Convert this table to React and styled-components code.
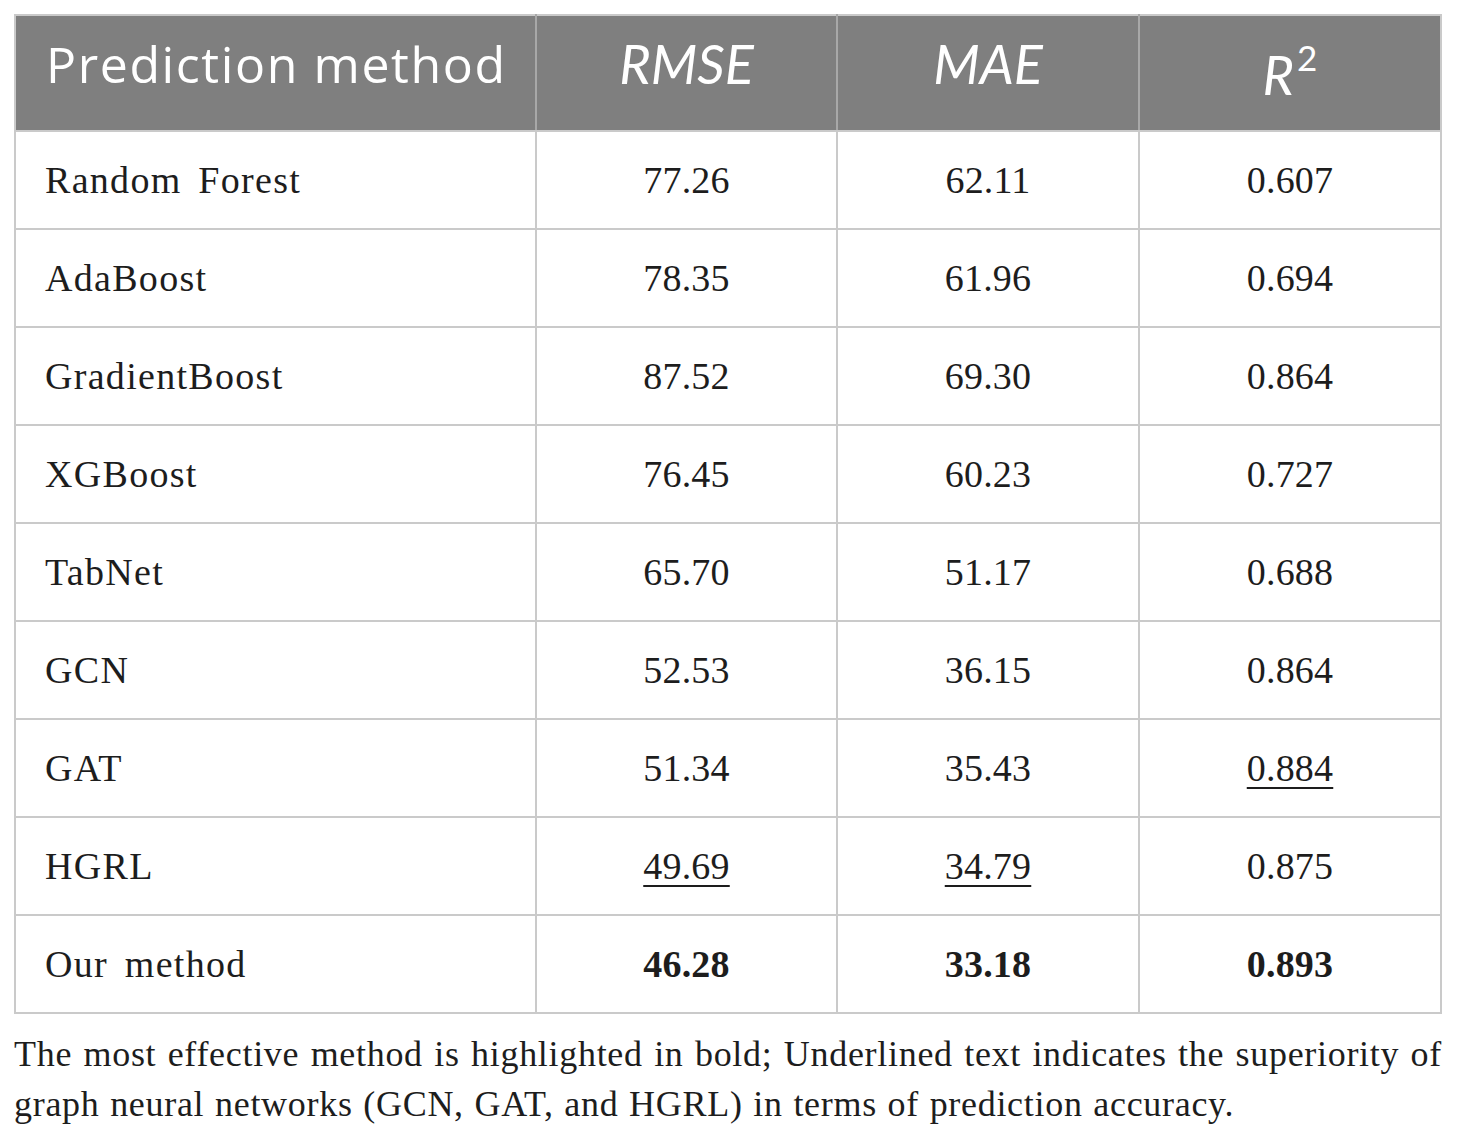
import React from 'react';
import styled, { createGlobalStyle } from 'styled-components';

const GlobalStyle = createGlobalStyle`
  html, body {
    margin: 0;
    padding: 0;
    background: #ffffff;
  }
`;

const Page = styled.div`
  padding: 14px 19px 0 14px;
  width: 1427px;
`;

const Table = styled.table`
  width: 1428px;
  border-collapse: collapse;
  table-layout: fixed;
  border: 2px solid #cacaca;
`;

const HeadCell = styled.th`
  height: 116px;
  box-sizing: border-box;
  vertical-align: top;
  padding: ${(p) => p.top}px 0 0 ${(p) => (p.first ? '30px' : '0')};
  background: #7f7f7f;
  color: #ffffff;
  font-family: ${(p) => (p.first ? "'Open Sans', Lato" : "Lato, 'Open Sans'")}, sans-serif;
  font-weight: 400;
  font-size: ${(p) => p.size}px;
  letter-spacing: ${(p) => (p.first ? '1.6px' : '0')};
  line-height: 1;
  font-style: ${(p) => (p.italic ? 'italic' : 'normal')};
  text-align: ${(p) => (p.first ? 'left' : 'center')};
  border: 2px solid #a8a8a8;
  border-top: none;
  border-bottom-color: #cacaca;
  &:first-child {
    border-left: none;
  }
  &:last-child {
    border-right: none;
  }
  sup {
    font-size: 35px;
    font-style: normal;
    vertical-align: 24px;
    line-height: 0;
    margin-left: 3px;
  }
`;

const Cell = styled.td`
  height: 96px;
  padding: 0;
  padding-left: ${(p) => (p.first ? '29px' : '0')};
  font-family: 'Liberation Serif', 'Times New Roman', serif;
  font-size: 38px;
  letter-spacing: ${(p) => (p.first ? '1.3px' : '0.2px')};
  word-spacing: ${(p) => (p.first ? '6px' : '0')};
  color: #1d1d1d;
  text-align: ${(p) => (p.first ? 'left' : 'center')};
  font-weight: ${(p) => (p.bold ? 700 : 400)};
  text-decoration: ${(p) => (p.under ? 'underline' : 'none')};
  text-decoration-thickness: 2px;
  text-underline-offset: 6px;
  border: 2px solid #cacaca;
`;

const Caption = styled.p`
  margin: 15px 0 0 0;
  width: 1428px;
  font-family: 'Liberation Serif', 'Times New Roman', serif;
  font-size: 36px;
  letter-spacing: 0.7px;
  word-spacing: 1px;
  line-height: 50px;
  color: #1d1d1d;
  text-align: justify;
`;

const rows = [
  { name: 'Random Forest', rmse: '77.26', mae: '62.11', r2: '0.607' },
  { name: 'AdaBoost', rmse: '78.35', mae: '61.96', r2: '0.694' },
  { name: 'GradientBoost', rmse: '87.52', mae: '69.30', r2: '0.864' },
  { name: 'XGBoost', rmse: '76.45', mae: '60.23', r2: '0.727' },
  { name: 'TabNet', rmse: '65.70', mae: '51.17', r2: '0.688' },
  { name: 'GCN', rmse: '52.53', mae: '36.15', r2: '0.864' },
  { name: 'GAT', rmse: '51.34', mae: '35.43', r2: '0.884', u: ['r2'] },
  { name: 'HGRL', rmse: '49.69', mae: '34.79', r2: '0.875', u: ['rmse', 'mae'] },
  { name: 'Our method', rmse: '46.28', mae: '33.18', r2: '0.893', bold: true },
];

export default function App() {
  return (
    <Page>
      <GlobalStyle />
      <Table>
        <colgroup>
          <col style={{ width: 521 }} />
          <col style={{ width: 301 }} />
          <col style={{ width: 302 }} />
          <col style={{ width: 302 }} />
        </colgroup>
        <thead>
          <tr>
            <HeadCell first size={50} top={23}>
              Prediction method
            </HeadCell>
            <HeadCell italic size={54} top={21}>
              RMSE
            </HeadCell>
            <HeadCell italic size={54} top={21}>
              MAE
            </HeadCell>
            <HeadCell italic size={54} top={32}>
              R<sup>2</sup>
            </HeadCell>
          </tr>
        </thead>
        <tbody>
          {rows.map((r) => {
            const u = r.u || [];
            return (
              <tr key={r.name}>
                <Cell first>{r.name}</Cell>
                <Cell bold={r.bold} under={u.includes('rmse')}>
                  {r.rmse}
                </Cell>
                <Cell bold={r.bold} under={u.includes('mae')}>
                  {r.mae}
                </Cell>
                <Cell bold={r.bold} under={u.includes('r2')}>
                  {r.r2}
                </Cell>
              </tr>
            );
          })}
        </tbody>
      </Table>
      <Caption>
        The most effective method is highlighted in bold; Underlined text indicates the
        superiority of graph neural networks (GCN, GAT, and HGRL) in terms of prediction
        accuracy.
      </Caption>
    </Page>
  );
}
